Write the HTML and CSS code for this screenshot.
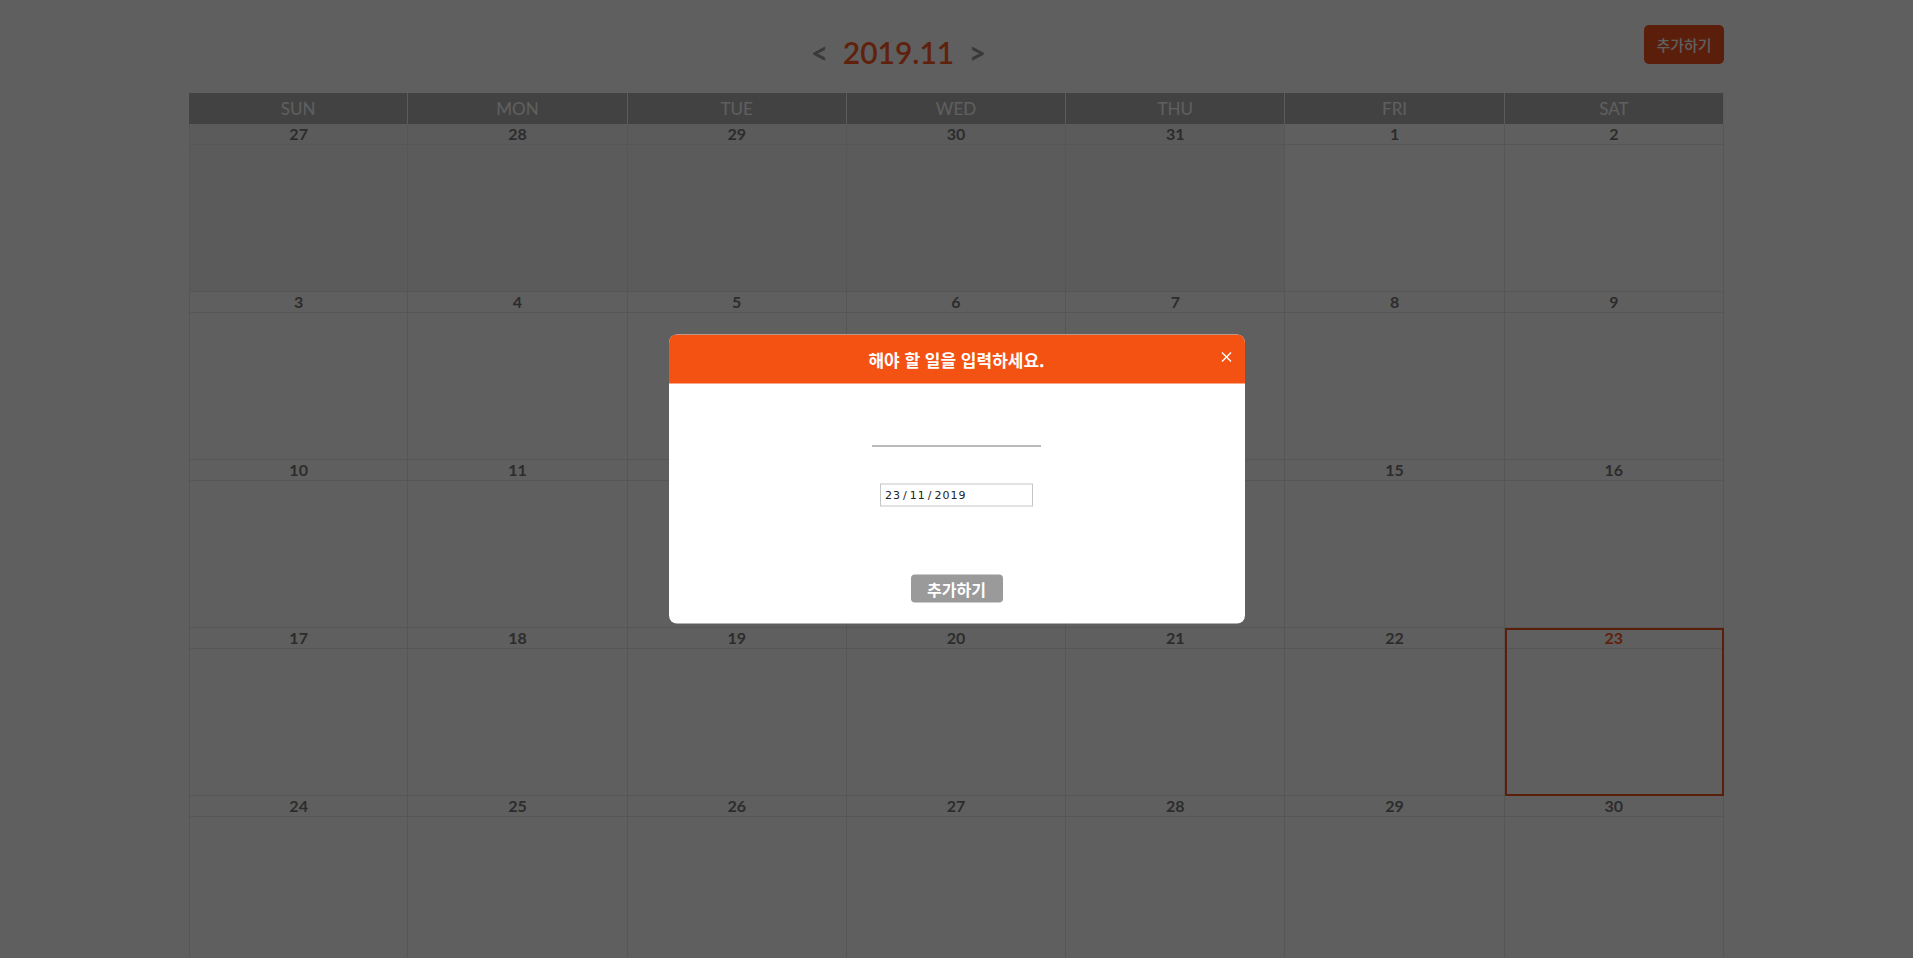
FILE: index.html
```html
<!DOCTYPE html>
<html lang="ko">
<head>
<meta charset="utf-8">
<title>Calendar</title>
<link rel="stylesheet" href="styles.css">
</head>
<body>
<div class="page">
  <div class="topbar">
    <div class="title">
      <span class="arrow">&lt;</span>
      <span class="month">2019.11</span>
      <span class="arrow">&gt;</span>
    </div>
    <button class="add-btn">추가하기</button>
  </div>
  <div class="calendar">
    <div class="head">SUN</div><div class="head">MON</div><div class="head">TUE</div><div class="head">WED</div><div class="head">THU</div><div class="head">FRI</div><div class="head">SAT</div>

    <div class="cell prev"><div class="num">27</div></div>
    <div class="cell prev"><div class="num">28</div></div>
    <div class="cell prev"><div class="num">29</div></div>
    <div class="cell prev"><div class="num">30</div></div>
    <div class="cell prev"><div class="num">31</div></div>
    <div class="cell"><div class="num">1</div></div>
    <div class="cell"><div class="num">2</div></div>

    <div class="cell"><div class="num">3</div></div>
    <div class="cell"><div class="num">4</div></div>
    <div class="cell"><div class="num">5</div></div>
    <div class="cell"><div class="num">6</div></div>
    <div class="cell"><div class="num">7</div></div>
    <div class="cell"><div class="num">8</div></div>
    <div class="cell"><div class="num">9</div></div>

    <div class="cell"><div class="num">10</div></div>
    <div class="cell"><div class="num">11</div></div>
    <div class="cell"><div class="num">12</div></div>
    <div class="cell"><div class="num">13</div></div>
    <div class="cell"><div class="num">14</div></div>
    <div class="cell"><div class="num">15</div></div>
    <div class="cell"><div class="num">16</div></div>

    <div class="cell"><div class="num">17</div></div>
    <div class="cell"><div class="num">18</div></div>
    <div class="cell"><div class="num">19</div></div>
    <div class="cell"><div class="num">20</div></div>
    <div class="cell"><div class="num">21</div></div>
    <div class="cell"><div class="num">22</div></div>
    <div class="cell today"><div class="num">23</div></div>

    <div class="cell"><div class="num">24</div></div>
    <div class="cell"><div class="num">25</div></div>
    <div class="cell"><div class="num">26</div></div>
    <div class="cell"><div class="num">27</div></div>
    <div class="cell"><div class="num">28</div></div>
    <div class="cell"><div class="num">29</div></div>
    <div class="cell"><div class="num">30</div></div>
  </div>
</div>

<div class="overlay"></div>
<div class="modal">
  <div class="modal-head">
    <span class="modal-title">해야 할 일을 입력하세요.</span>
    <span class="close">
      <svg width="11" height="11" viewBox="0 0 11 11"><path d="M1 1 L10 10 M10 1 L1 10" stroke="#fff" stroke-width="1.4" fill="none"/></svg>
    </span>
  </div>
  <div class="modal-body">
    <input class="todo-input" type="text">
    <div class="date-box"><span>23</span><span class="sep">/</span><span>11</span><span class="sep">/</span><span>2019</span></div>
    <button class="submit-btn">추가하기</button>
  </div>
</div>
</body>
</html>
```
FILE: styles.css
```css
html, body {
  margin: 0;
  padding: 0;
  background: #ffffff;
  font-family: Lato, "Noto Sans CJK KR", sans-serif;
}

.page {
  width: 1535px;
  margin: 0 auto;
}

.topbar {
  height: 93px;
  box-sizing: border-box;
  padding-top: 25px;
  display: flex;
  align-items: flex-start;
}

.title {
  flex: 1;
  text-align: center;
  margin-top: 9px;
  font-size: 30px;
  line-height: 36px;
  font-weight: 600;
}

.arrow {
  color: #9a9a9a;
  font-weight: 700;
  margin: 0 3px;
}

.month {
  color: #ff5a1e;
  margin: 0 4px;
}

.add-btn {
  margin-left: 36px;
  width: 80px;
  height: 39px;
  border: 0;
  border-radius: 5px;
  background: #f4511e;
  color: #ffffff;
  font-family: "Noto Sans CJK KR", sans-serif;
  font-size: 15px;
  font-weight: 500;
  padding: 0;
}

.calendar {
  display: grid;
  grid-template-columns: repeat(7, 1fr);
}

.head {
  height: 31px;
  line-height: 31px;
  background: #b1b1b1;
  color: #ffffff;
  text-align: center;
  font-size: 17px;
  border-right: 1px solid #f4f4f4;
  box-sizing: border-box;
}

.head:last-of-type {
  border-right: 0;
}

.cell {
  height: 168px;
  box-sizing: border-box;
  border-right: 1px solid #e6e6e6;
  border-bottom: 1px solid #e6e6e6;
}

.cell:nth-child(7n + 1) {
  border-left: 1px solid #e6e6e6;
}

.cell.prev {
  background: #f3f3f3;
}

.num {
  height: 20px;
  line-height: 20px;
  border-bottom: 1px solid #e6e6e6;
  text-align: center;
  font-size: 16px;
  font-weight: 700;
  color: #777777;
}

.cell.today {
  outline: 2px solid #f4511e;
  outline-offset: -2px;
}

.cell.today .num {
  color: #ff5a1e;
}

.overlay {
  position: fixed;
  inset: 0;
  background: rgba(0, 0, 0, 0.627);
}

.modal {
  position: fixed;
  left: 50%;
  top: 50%;
  transform: translate(-50%, -50%);
  width: 576px;
  background: #ffffff;
  border-radius: 8px;
  overflow: hidden;
  font-family: "Noto Sans CJK KR", sans-serif;
}

.modal-head {
  position: relative;
  height: 49px;
  background: #f35213;
  display: flex;
  align-items: center;
  justify-content: center;
}

.modal-title {
  color: #ffffff;
  font-size: 17px;
  font-weight: 700;
}

.close {
  position: absolute;
  right: 13px;
  top: 17px;
  width: 11px;
  height: 11px;
  display: flex;
}

.modal-body {
  display: flex;
  flex-direction: column;
  align-items: center;
  padding: 41px 0 21px;
}

.todo-input {
  width: 169px;
  height: 22px;
  box-sizing: border-box;
  border: 0;
  border-bottom: 1px solid #767676;
  outline: none;
  padding: 0;
  margin: 0;
}

.date-box {
  margin-top: 37px;
  width: 153px;
  height: 23px;
  box-sizing: border-box;
  border: 1px solid #c6c6c6;
  padding-left: 4px;
  display: flex;
  align-items: center;
  font-family: "DejaVu Sans", sans-serif;
  font-size: 11px;
  letter-spacing: 1px;
  color: #222222;
}

.date-box .sep {
  margin: 0 2px;
}

.submit-btn {
  margin-top: 68px;
  width: 92px;
  height: 28px;
  border: 0;
  border-radius: 4px;
  background: #9a9a9a;
  color: #ffffff;
  font-family: "Noto Sans CJK KR", sans-serif;
  font-size: 16px;
  font-weight: 700;
  padding: 0;
}
```
